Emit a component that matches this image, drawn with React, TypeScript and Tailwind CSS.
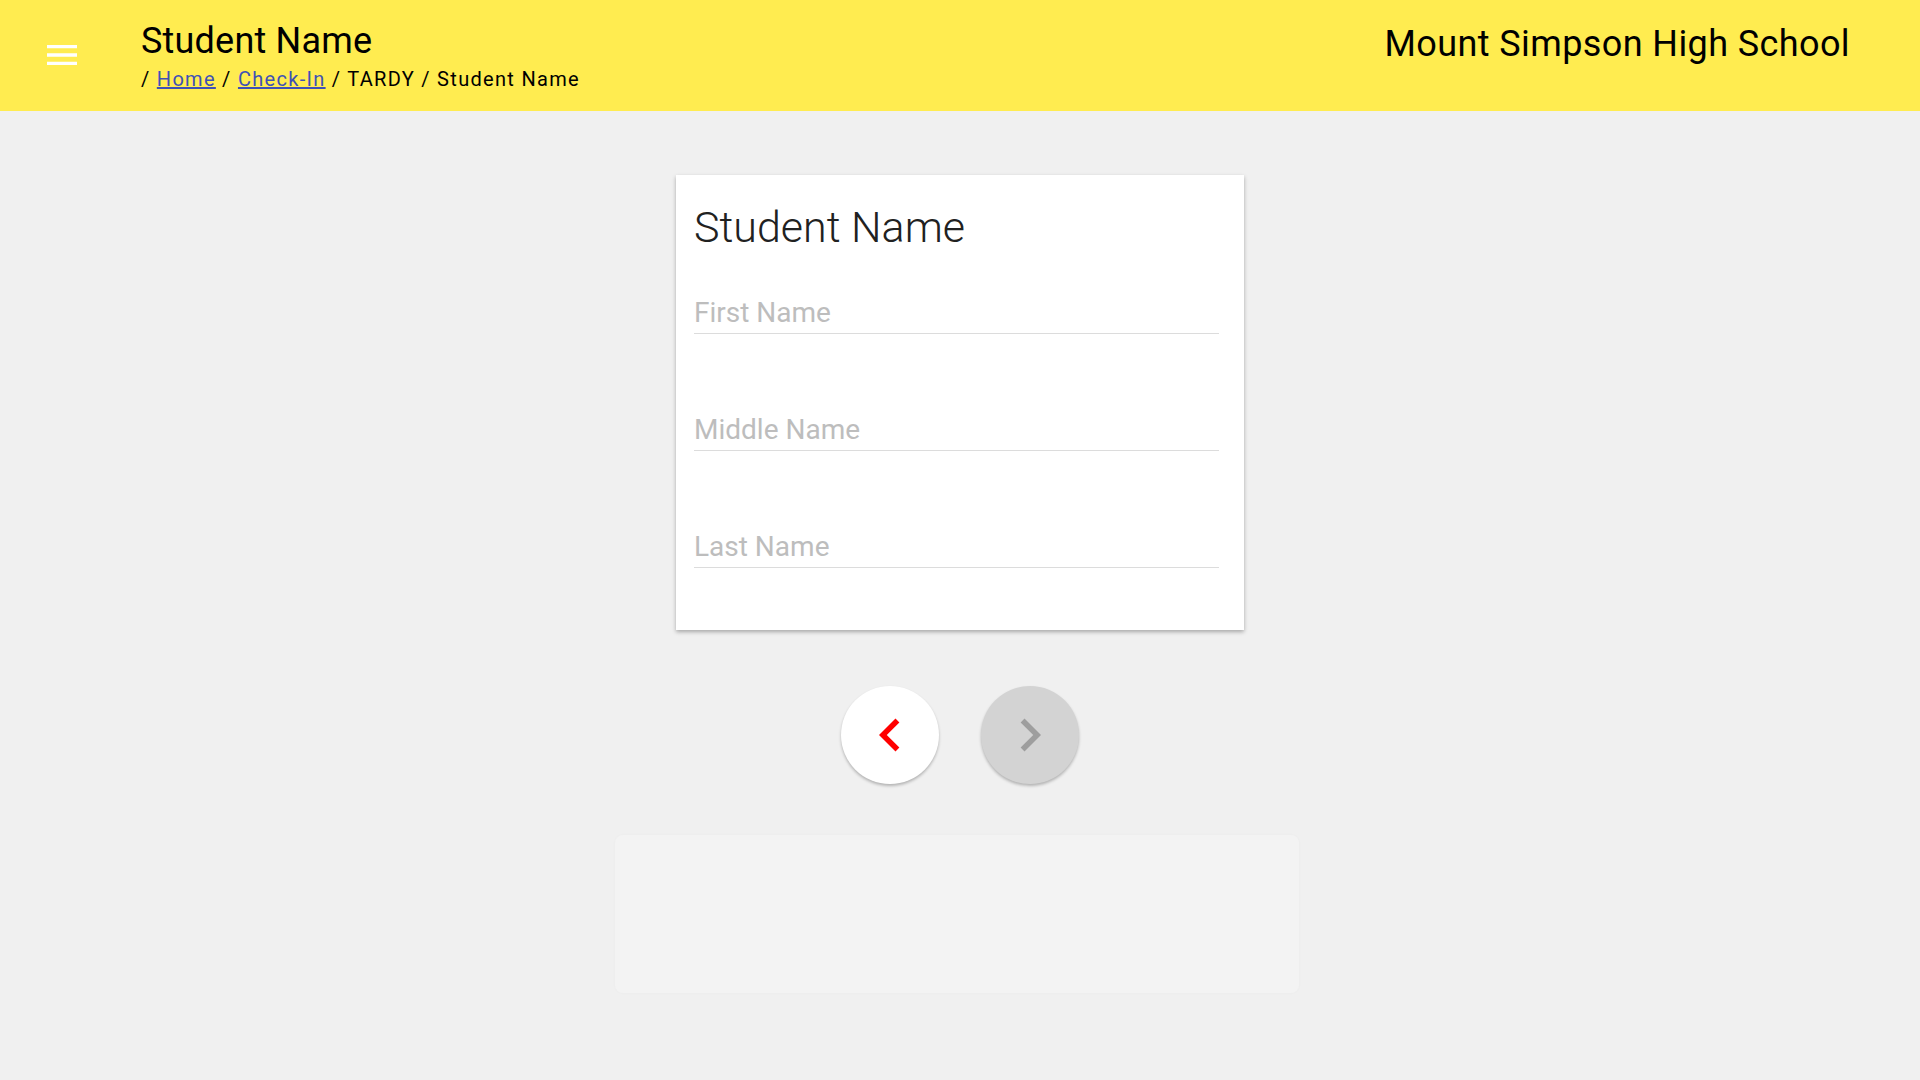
import React from "react";

export default function App() {
  const font = { fontFamily: "Roboto, 'Liberation Sans', sans-serif" };
  return (
    <div className="min-h-screen w-full bg-[#f0f0f0]" style={font}>
      <header className="flex h-[111px] w-full items-start bg-[#ffec50]">
        <div className="ml-[42px] mt-[35px] h-[40px] w-[40px]">
          <svg viewBox="0 0 24 24" width="40" height="40" fill="#ffffff">
            <path d="M3 18h18v-2H3v2zm0-5h18v-2H3v2zm0-7v2h18V6H3z" />
          </svg>
        </div>
        <div className="ml-[59px] flex flex-col pt-[17px]">
          <div className="text-[36px] leading-[48px] tracking-[0.2px] text-black">Student Name</div>
          <div className="mt-[2px] text-[20px] leading-[24px] tracking-[1.3px] text-black">
            / <a href="#" className="text-[#3f51b5] underline">Home</a> /{" "}
            <a href="#" className="text-[#3f51b5] underline">Check-In</a> / TARDY / Student Name
          </div>
        </div>
        <div className="ml-auto mr-[70px] pt-[20px] text-[36px] leading-[48px] tracking-[0.4px] text-black">
          Mount Simpson High School
        </div>
      </header>

      <main className="flex flex-col items-center">
        <div className="mt-[64px] w-[568px] bg-white px-[18px] pb-[62px] pt-[24px] shadow-[0_2px_4px_rgba(0,0,0,0.3)]">
          <h1 className="text-[43px] font-light leading-[56px] text-[#212121]">Student Name</h1>
          <div className="mt-[41px] flex w-[525px] flex-col gap-[79px]">
            {["First Name", "Middle Name", "Last Name"].map((p) => (
              <div key={p} className="border-b border-[#dcdcdc] pb-[4px]">
                <input
                  placeholder={p}
                  className="w-full bg-transparent text-[28px] leading-[28px] text-[#333] outline-none placeholder:text-[#bdbdbd]"
                  style={font}
                />
              </div>
            ))}
          </div>
        </div>

        <div className="mt-[56px] flex gap-[42px]">
          <button className="flex h-[98px] w-[98px] items-center justify-center rounded-full bg-white shadow-[0_2px_3px_rgba(0,0,0,0.25)]">
            <svg viewBox="0 0 24 24" width="66" height="66" fill="#ff0000">
              <path d="M15.41 7.41L14 6l-6 6 6 6 1.41-1.41L10.83 12z" />
            </svg>
          </button>
          <button className="flex h-[98px] w-[98px] items-center justify-center rounded-full bg-[#d3d3d3] shadow-[0_2px_3px_rgba(0,0,0,0.25)]">
            <svg viewBox="0 0 24 24" width="66" height="66" fill="#9e9e9e">
              <path d="M10 6L8.59 7.41 13.17 12l-4.58 4.59L10 18l6-6z" />
            </svg>
          </button>
        </div>

        <div className="mr-[6px] mt-[51px] h-[158px] w-[684px] rounded-[8px] bg-[#f3f3f3] shadow-[0_0_3px_rgba(0,0,0,0.03)]" />
      </main>
    </div>
  );
}
